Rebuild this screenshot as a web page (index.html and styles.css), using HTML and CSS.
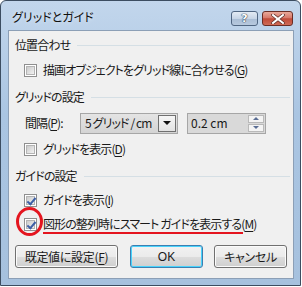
FILE: index.html
```html
<!DOCTYPE html>
<html lang="ja">
<head>
    <meta charset="UTF-8">
    <title>グリッドとガイド</title>
    <link rel="stylesheet" href="styles.css">
</head>
<body>
    <div class="window">
        <div class="titlebar">
            <span class="title">グリッドとガイド</span>
            <div class="caption-buttons">
                <div class="cap-btn help">?</div>
                <div class="cap-btn close">
                    <svg width="14" height="10" viewBox="0 0 14 10">
                        <path d="M2 1 L12 9 M12 1 L2 9" stroke="#5a2a24" stroke-width="3.4" stroke-linecap="square"/>
                        <path d="M2 1 L12 9 M12 1 L2 9" stroke="#ffffff" stroke-width="2" stroke-linecap="square"/>
                    </svg>
                </div>
            </div>
        </div>

        <div class="client">
            <div class="group-head h1"><span>位置合わせ</span><i></i></div>
            <div class="row r1">
                <span class="check"></span>
                <span class="label">描画オブジェクトをグリッド線に合わせる(<u>G</u>)</span>
            </div>

            <div class="group-head h2"><span>グリッドの設定</span><i></i></div>
            <div class="row interval">
                <span class="ilabel">間隔(<u>P</u>):</span>
                <div class="combo">
                    <span>5 グリッド / cm</span>
                    <div class="drop"><b></b></div>
                </div>
                <div class="spin">
                    <span>0.2 cm</span>
                    <div class="spin-btns">
                        <div class="sb up"><b></b></div>
                        <div class="sb down"><b></b></div>
                    </div>
                </div>
            </div>
            <div class="row r3">
                <span class="check"></span>
                <span class="label">グリッドを表示(<u>D</u>)</span>
            </div>

            <div class="group-head h3"><span>ガイドの設定</span><i></i></div>
            <div class="row r4">
                <span class="check on"></span>
                <span class="label">ガイドを表示(<u>I</u>)</span>
            </div>
            <div class="row r5">
                <span class="check on"></span>
                <span class="label">図形の整列時にスマート ガイドを表示する(<u>M</u>)</span>
                <span class="red-circle"></span>
                <span class="red-line"></span>
            </div>

            <div class="buttons">
                <div class="btn wide">既定値に設定(<u>F</u>)</div>
                <div class="btn ok">OK</div>
                <div class="btn">キャンセル</div>
            </div>
        </div>
    </div>
</body>
</html>
```

FILE: styles.css
```css
body {
    margin: 0;
    background: #ffffff;
    font-family: "Noto Sans CJK JP", "Noto Sans", sans-serif;
    font-size: 12px;
    font-feature-settings: "palt";
    letter-spacing: -0.9px;
    color: #1a1a1a;
    white-space: nowrap;
}

.window {
    width: 301px;
    height: 286px;
    box-sizing: border-box;
    border: 1px solid #3c4d61;
    border-radius: 6px 6px 0 0;
    background: linear-gradient(180deg, #c2d6ec 0%, #aac5e2 40%, #a6c1de 100%);
    padding: 0 6px 6px 7px;
    display: flex;
    flex-direction: column;
}

.titlebar {
    height: 29px;
    display: flex;
    justify-content: space-between;
    align-items: flex-start;
}

.title {
    margin: 9px 0 0 4px;
    font-size: 12px;
    line-height: 14px;
    letter-spacing: 0;
    color: #101010;
    text-shadow: 0 0 4px #e6eef8;
}

.caption-buttons {
    display: flex;
    gap: 4px;
    margin-top: 10px;
    margin-right: 1px;
}

.cap-btn {
    height: 15px;
    box-sizing: border-box;
    border: 1px solid #506682;
    border-radius: 3px;
    display: flex;
    align-items: center;
    justify-content: center;
}

.help {
    width: 27px;
    background: linear-gradient(180deg, #e3ebf4 0%, #c7d5e6 50%, #a9bdd5 51%, #b7c9de 100%);
    color: #ffffff;
    font-family: "DejaVu Sans", sans-serif;
    font-weight: bold;
    font-size: 11px;
    line-height: 12px;
    letter-spacing: 0;
    text-shadow: 0 0 1px #2f3f55, 0 0 1px #2f3f55, 0 0 1px #2f3f55;
}

.close {
    width: 31px;
    border-color: #6a2d25;
    background: linear-gradient(180deg, #e9a99a 0%, #d7786a 45%, #c04a38 52%, #cf6b56 100%);
}

.client {
    flex: 1;
    background: #f0f0f0;
    border: 1px solid #8c9fb6;
    padding: 5px 3px 0 6px;
    position: relative;
}

.group-head {
    height: 18px;
    display: flex;
    align-items: center;
    line-height: 14px;
}

.group-head i {
    flex: 1;
    height: 1px;
    background: #d5dfe5;
    margin-left: 7px;
    margin-top: 1px;
}

.h2 {
    margin-top: 8px;
}

.h3 {
    margin-top: 8px;
}

.row {
    height: 20px;
    display: flex;
    align-items: center;
    padding-left: 9px;
    line-height: 14px;
    position: relative;
}

.r1 {
    margin-top: 6px;
}

.r3 {
    margin-top: 5px;
}

.r4 {
    margin-top: 5px;
}

.r5 {
    margin-top: 4px;
}

.label u,
.ilabel u,
.btn u {
    text-decoration: underline;
    text-underline-offset: 2px;
}

.check {
    width: 13px;
    height: 13px;
    box-sizing: border-box;
    border: 1px solid #8f8f8f;
    background: #ffffff;
    margin-right: 6px;
    position: relative;
    flex-shrink: 0;
}

.check::before {
    content: "";
    position: absolute;
    left: 1px;
    top: 1px;
    right: 1px;
    bottom: 1px;
    background: linear-gradient(135deg, #cbcbcb, #f2f2f2);
    border: 1px solid #b4b4b4;
    box-sizing: border-box;
}

.check.on::after {
    content: "";
    position: absolute;
    left: 4px;
    top: 1px;
    width: 3px;
    height: 7px;
    border: solid #3d5fa6;
    border-width: 0 2px 2px 0;
    transform: rotate(40deg);
}

.interval {
    height: 22px;
    margin-top: 6px;
    padding-left: 10px;
}

.ilabel {
    width: 55px;
}

.combo {
    width: 98px;
    height: 21px;
    box-sizing: border-box;
    border: 1px solid #a6a6a6;
    background: linear-gradient(180deg, #e4e4e4, #d4d4d4);
    display: flex;
    align-items: center;
    padding-left: 4px;
}

.combo span {
    flex: 1;
    letter-spacing: -0.9px;
}

.drop {
    width: 18px;
    height: 17px;
    margin-right: 1px;
    box-sizing: border-box;
    border: 1px solid #707070;
    background: linear-gradient(180deg, #f6f6f6, #e2e2e2);
    display: flex;
    align-items: center;
    justify-content: center;
}

.drop b {
    border-left: 4px solid transparent;
    border-right: 4px solid transparent;
    border-top: 4px solid #111111;
}

.spin {
    width: 79px;
    height: 21px;
    margin-left: 9px;
    box-sizing: border-box;
    border: 1px solid #a6a6a6;
    background: #d9d9d9;
    display: flex;
    align-items: center;
    padding-left: 3px;
    font-size: 12px;
}

.spin span {
    flex: 1;
    letter-spacing: 0;
}

.spin-btns {
    width: 16px;
    margin-right: 1px;
    display: flex;
    flex-direction: column;
    gap: 1px;
}

.sb {
    height: 8px;
    box-sizing: border-box;
    border: 1px solid #b9b9b9;
    background: #f4f4f4;
    display: flex;
    align-items: center;
    justify-content: center;
}

.sb.up b {
    border-left: 3px solid transparent;
    border-right: 3px solid transparent;
    border-bottom: 3px solid #5b6e94;
}

.sb.down b {
    border-left: 3px solid transparent;
    border-right: 3px solid transparent;
    border-top: 3px solid #5b6e94;
}

.red-circle {
    position: absolute;
    left: 1px;
    top: -7px;
    width: 27px;
    height: 29px;
    box-sizing: border-box;
    border: 3px solid #e4151f;
    border-radius: 50%;
}

.red-line {
    position: absolute;
    left: 28px;
    width: 200px;
    top: 18px;
    height: 2px;
    background: #e4151f;
}

.buttons {
    display: flex;
    margin-top: 11px;
    padding-left: 0;
}

.btn {
    width: 73px;
    height: 23px;
    box-sizing: border-box;
    border: 1px solid #707070;
    border-radius: 3px;
    background: linear-gradient(180deg, #f2f2f2 0%, #ebebeb 50%, #dddddd 51%, #cfcfcf 100%);
    display: flex;
    align-items: center;
    justify-content: center;
    line-height: 14px;
    letter-spacing: -0.3px;
    box-shadow: inset 0 0 0 1px #fbfbfb;
}

.btn.wide {
    width: 103px;
}

.btn.ok {
    margin-left: 12px;
    border-color: #3c7fb1;
    box-shadow: inset 0 0 0 1px #48d3fc;
    font-family: "Liberation Sans", sans-serif;
    letter-spacing: 0;
}

.btn.ok + .btn {
    margin-left: 11px;
}
```
